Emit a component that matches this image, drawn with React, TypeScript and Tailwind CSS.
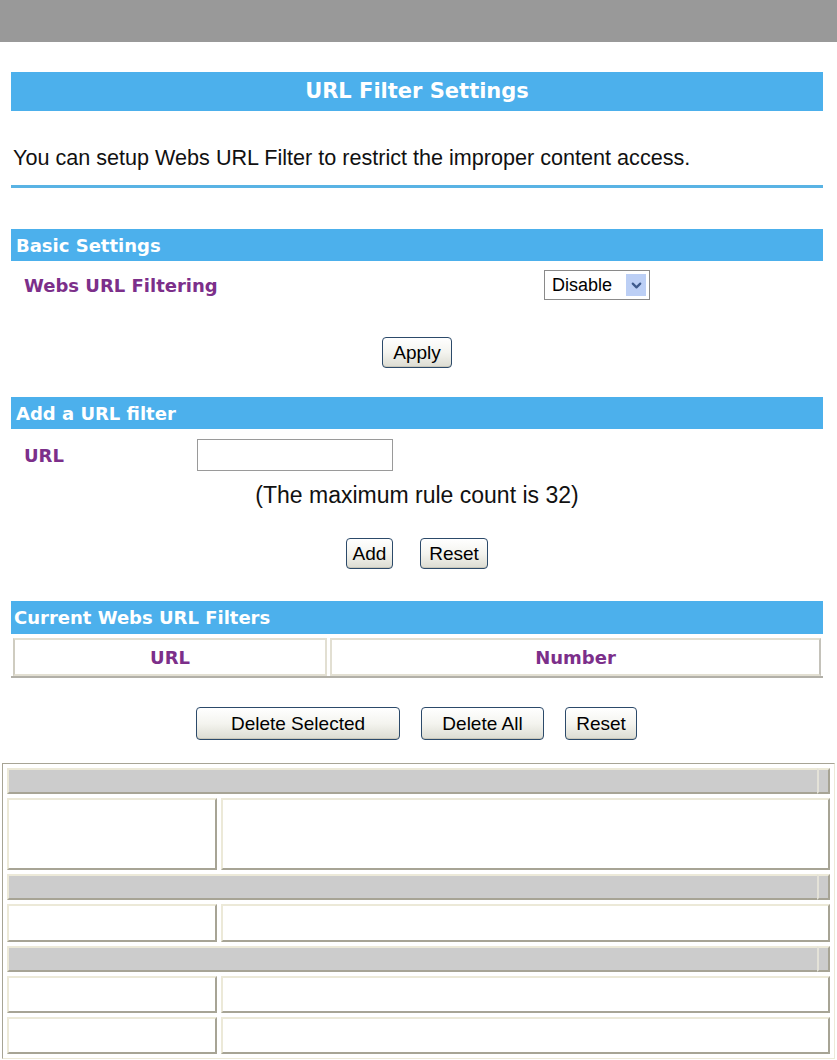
import { ChevronDown } from 'lucide-react';

const blueBar = 'flex items-center bg-[#4cb0ec] text-white font-bold';
const heading = { fontFamily: '"DejaVu Sans", Verdana, sans-serif' };
const body = { fontFamily: '"Liberation Sans", Arial, sans-serif' };

function XpButton({ label, width }: { label: string; width: string }) {
  return (
    <button
      style={body}
      className={`${width} h-full rounded-[4px] border border-[#2c4a6a] bg-gradient-to-b from-white via-[#f4f4ef] to-[#dcdcd2] text-[19px] leading-none text-black shadow-[inset_0_-1px_0_#c9c7ba]`}
    >
      {label}
    </button>
  );
}

function GrayRow() {
  return (
    <div className="flex h-[26px]">
      <div className="flex-1 border-t-2 border-b-2 border-l-2 border-t-[#ece9d8] border-l-[#ece9d8] border-b-[#a7a495] bg-[#cccccc]" />
      <div className="w-[13px] border-2 border-t-[#ece9d8] border-l-[#e4e2d8] border-b-[#a7a495] border-r-[#a7a495] bg-[#cccccc]" />
    </div>
  );
}

function WhiteRow({ height }: { height: string }) {
  const cell = 'border-2 border-t-[#ece9d8] border-l-[#ece9d8] border-b-[#a7a495] border-r-[#a7a495] bg-white';
  return (
    <div className={`flex gap-[4px] ${height}`}>
      <div className={`w-[210px] ${cell}`} />
      <div className={`flex-1 ${cell}`} />
    </div>
  );
}

export default function App() {
  return (
    <div className="min-h-[1060px] w-[837px] bg-white text-black">
      <div className="h-[42px] bg-[#999999]" />

      <div className="ml-[11px] mr-[14px]">
        <div style={heading} className={`${blueBar} mt-[30px] h-[39px] justify-center text-[21px]`}>
          URL Filter Settings
        </div>

        <div style={body} className="h-[74px] pl-[2px] pt-[35px] text-[21.6px] leading-[24px] text-[#111]">
          You can setup Webs URL Filter to restrict the improper content access.
        </div>
        <div className="h-[3px] bg-[#59b3e4]" />

        <div style={heading} className={`${blueBar} mt-[41px] h-[32px] pl-[5px] text-[18px]`}>
          Basic Settings
        </div>
        <div className="mt-[9px] grid h-[30px] grid-cols-[533px_1fr] items-center">
          <span style={heading} className="pl-[13px] text-[18px] font-bold text-[#7c2f8a]">
            Webs URL Filtering
          </span>
          <div className="flex h-[30px] w-[106px] items-center border border-[#8a8a8a] bg-white pl-[7px] pr-[3px]">
            <span style={body} className="flex-1 text-[18px] leading-none">Disable</span>
            <span className="flex h-[22px] w-[20px] items-center justify-center bg-[#bccff5]">
              <ChevronDown className="h-[15px] w-[15px] text-[#3f5a8c]" strokeWidth={3.5} />
            </span>
          </div>
        </div>

        <div className="mt-[37px] flex h-[31px] justify-center">
          <XpButton label="Apply" width="w-[70px]" />
        </div>

        <div style={heading} className={`${blueBar} mt-[29px] h-[32px] pl-[5px] text-[18px]`}>
          Add a URL filter
        </div>
        <div className="mt-[10px] grid h-[32px] grid-cols-[186px_196px] items-center">
          <span style={heading} className="pl-[13px] text-[18px] font-bold text-[#7c2f8a]">
            URL
          </span>
          <input className="h-[32px] w-[196px] border border-[#9a9a9a] bg-white outline-none" />
        </div>
        <p style={body} className="mt-[12px] text-center text-[23px] leading-[24px] text-[#111]">
          (The maximum rule count is 32)
        </p>

        <div className="mt-[31px] flex h-[31px] justify-center gap-[27px]">
          <XpButton label="Add" width="w-[47px]" />
          <XpButton label="Reset" width="w-[68px]" />
        </div>

        <div style={heading} className={`${blueBar} mt-[32px] h-[33px] pl-[3px] text-[18px]`}>
          Current Webs URL Filters
        </div>
        <div className="mt-[4px] flex h-[40px] gap-[3px] border-b-2 border-[#b2b0a8] px-[2px]">
          <div
            style={heading}
            className="flex w-[314px] items-center justify-center border-2 border-[#e2dfd2] border-l-[#cfccc0] bg-white text-[18px] font-bold text-[#7c2f8a]"
          >
            URL
          </div>
          <div
            style={heading}
            className="flex flex-1 items-center justify-center border-2 border-[#e2dfd2] border-r-[#c4c2ba] bg-white text-[18px] font-bold text-[#7c2f8a]"
          >
            Number
          </div>
        </div>

        <div className="mt-[29px] flex h-[33px] justify-center gap-[21px] pr-[1px]">
          <XpButton label="Delete Selected" width="w-[204px]" />
          <XpButton label="Delete All" width="w-[123px]" />
          <XpButton label="Reset" width="w-[72px]" />
        </div>
      </div>

      <div className="mx-[2px] mt-[23px] flex flex-col gap-[4px] border border-t-[#a7a495] border-l-[#a7a495] border-r-[#ece9d8] border-b-[#ece9d8] p-[4px]">
        <GrayRow />
        <WhiteRow height="h-[72px]" />
        <GrayRow />
        <WhiteRow height="h-[38px]" />
        <GrayRow />
        <WhiteRow height="h-[37px]" />
        <WhiteRow height="h-[37px]" />
      </div>
    </div>
  );
}
